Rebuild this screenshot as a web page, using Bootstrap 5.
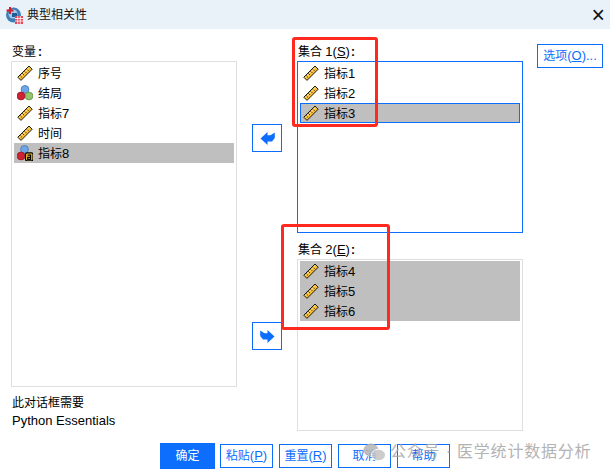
<!DOCTYPE html>
<html lang="zh-CN">
<head>
<meta charset="utf-8">
<title>典型相关性</title>
<link href="https://cdn.jsdelivr.net/npm/bootstrap@5.3.0/dist/css/bootstrap.min.css" rel="stylesheet">
<style>
html,body{margin:0;background:#fff;}
body{font-family:"Liberation Sans","Noto Sans CJK SC",sans-serif;font-size:12px;line-height:18px;color:#000;}
.dlg{width:610px;height:476px;position:relative;overflow:hidden;}
.lat{font-size:13px;}
.ttl{height:29px;background:#e9f2f9;padding-left:5px;color:#111;}
.ttl-x{margin-right:5px;font-family:"Liberation Sans",sans-serif;font-size:23px;line-height:20px;height:20px;color:#111;font-weight:400;}
.mainwrap{padding:14px 0 0 11px;}
.colleft,.colright{width:226px;}
.colmid{width:30px;margin:0 15px;}
.lbl{height:18px;padding-left:1px;white-space:nowrap;}
.cln{font-weight:700;padding-left:2px;}
.colright .cln{padding-left:1px;}
.box{border:1px solid #dfdfdf;padding:1px 2px;border-radius:0;background:#fff;}
.box-l{height:326px;}
.box-r{height:172px;}
.box-on{border-color:#0d6efd;}
.setgap{margin-top:8px;}
.row-i{height:20px;background:transparent;padding:2px 0 0 3px;border:0;border-radius:0;color:#000;line-height:18px;font-size:12px;gap:5px;}
.row-i svg{flex:none;margin-top:-2px;}
.row-sel{background:#bfbfbf;}
.row-foc{background:#bfbfbf;outline:1px solid #0d6efd;outline-offset:-1px;}
.note{padding:8px 0 0 1px;line-height:17px;}
.arrow{width:30px;height:28px;padding:0;border-radius:0;display:flex;align-items:center;justify-content:center;background:#fff;}
.arrow-a{margin-top:81px;}
.arrow-b{margin-top:170px;}
.opt{width:66px;height:24px;margin:1px 0 0 14px;padding:0;border-radius:0;font-size:12px;line-height:22px;}
.foot{margin-top:12px;padding-left:160px;gap:6px;height:26px;}
.fbtn{width:53px;height:24px;padding:0;border-radius:0;font-size:12px;line-height:22px;background:#fff;}
.fok{width:55px;height:26px;margin-right:-1px;border-radius:0;padding:0;font-size:12px;line-height:24px;}
.redbox{position:absolute;border:3px solid #ff2a1f;border-radius:3px;pointer-events:none;}
.red-a{left:292px;top:37px;width:86px;height:90px;}
.red-b{left:281px;top:224px;width:109px;height:106px;}
.wm{position:absolute;left:363px;top:442px;height:20px;color:#a6a6a6;opacity:.85;font-size:16px;line-height:20px;white-space:nowrap;gap:4px;pointer-events:none;letter-spacing:.8px;}
</style>
</head>
<body>
<svg width="0" height="0" class="position-absolute">
  <defs>
    <symbol id="ruler" viewBox="0 0 16 16">
      <path d="M0.8 12.2 L12 1 L15.2 4.2 L4 15.4 Z" fill="#f7bc2d" stroke="#1c1c1c" stroke-width="1" stroke-linejoin="round"/>
      <path d="M3.2 10.6l1.6 1.6M5.4 8.4l1.6 1.6M7.6 6.2l1.6 1.6M9.8 4l1.6 1.6" stroke="#1c1c1c" stroke-width="1" fill="none"/>
      <path d="M2.6 12.6L12.4 2.8" stroke="#ffe9a8" stroke-width=".8" fill="none"/>
    </symbol>
    <symbol id="balls" viewBox="0 0 16 16">
      <circle cx="8" cy="4.4" r="3.9" fill="#6ea6e6" stroke="#3f74b8" stroke-width=".8"/>
      <circle cx="12" cy="11" r="3.9" fill="#94c46c" stroke="#5f9440" stroke-width=".8"/>
      <circle cx="4" cy="11" r="3.9" fill="#cf2234" stroke="#9c1524" stroke-width=".8"/>
    </symbol>
    <symbol id="ballslock" viewBox="0 0 16 16">
      <circle cx="7.5" cy="4.4" r="3.9" fill="#6ea6e6" stroke="#3f74b8" stroke-width=".8"/>
      <circle cx="4" cy="11" r="3.9" fill="#cf2234" stroke="#9c1524" stroke-width=".8"/>
      <rect x="8.5" y="7.8" width="7.5" height="8" rx="1.6" fill="#f5c12e" stroke="#000" stroke-width="1.2"/>
      <path d="M10.6 10.2h3v4.2h-2.9v-2h2.9" fill="none" stroke="#000" stroke-width="1.2"/>
    </symbol>
  </defs>
</svg>
<div class="dlg">
  <div class="ttl d-flex align-items-center">
    <svg width="18" height="18" viewBox="0 0 18 18" class="me-1 flex-shrink-0">
      <circle cx="8.5" cy="9" r="7.5" fill="#3f7fb8"/>
      <circle cx="8" cy="8" r="4.5" fill="#a5c9e6"/>
      <path d="M5 1v7M1.5 4.5h7" stroke="#d3202e" stroke-width="2"/>
      <rect x="7" y="7" width="5" height="4" fill="#1f5f96"/>
      <rect x="10" y="10" width="8" height="8" fill="#e8445a"/>
      <path d="M10 12.5h8M10 15h8M12.7 10v8M15.3 10v8" stroke="#fff" stroke-width=".8"/>
    </svg>
    <span>典型相关性</span>
    <span class="ttl-x ms-auto">×</span>
  </div>

  <div class="mainwrap d-flex align-items-start">
    <div class="colleft">
      <div class="lbl">变量<span class="cln">:</span></div>
      <ul class="list-group box box-l">
        <li class="list-group-item row-i d-flex align-items-center"><svg width="16" height="16"><use href="#ruler"/></svg><span>序号</span></li>
        <li class="list-group-item row-i d-flex align-items-center"><svg width="16" height="16"><use href="#balls"/></svg><span>结局</span></li>
        <li class="list-group-item row-i d-flex align-items-center"><svg width="16" height="16"><use href="#ruler"/></svg><span>指标<span class="lat">7</span></span></li>
        <li class="list-group-item row-i d-flex align-items-center"><svg width="16" height="16"><use href="#ruler"/></svg><span>时间</span></li>
        <li class="list-group-item row-i row-sel d-flex align-items-center"><svg width="16" height="16"><use href="#ballslock"/></svg><span>指标<span class="lat">8</span></span></li>
      </ul>
      <div class="note">此对话框需要<br><span class="lat">Python Essentials</span></div>
    </div>

    <div class="colmid d-flex flex-column">
      <button type="button" class="btn btn-outline-primary arrow arrow-a" aria-label="移回">
        <svg width="15" height="15" viewBox="0 0 15 15"><path d="M0.5 7.5L7.5 1V4.2H10.5L14.8 1.6V7L12 10.6H7.5V14Z" fill="#0d6efd"/></svg>
      </button>
      <button type="button" class="btn btn-outline-primary arrow arrow-b" aria-label="移入">
        <svg width="15" height="15" viewBox="0 0 15 15"><path d="M14.5 7.5L7.5 1V4.2H4.5L0.2 1.6V7L3 10.6H7.5V14Z" fill="#0d6efd"/></svg>
      </button>
    </div>

    <div class="colright">
      <div class="lbl">集合 <span class="lat">1(<u>S</u>)</span><span class="cln">:</span></div>
      <ul class="list-group box box-r box-on">
        <li class="list-group-item row-i d-flex align-items-center"><svg width="16" height="16"><use href="#ruler"/></svg><span>指标<span class="lat">1</span></span></li>
        <li class="list-group-item row-i d-flex align-items-center"><svg width="16" height="16"><use href="#ruler"/></svg><span>指标<span class="lat">2</span></span></li>
        <li class="list-group-item row-i row-foc d-flex align-items-center"><svg width="16" height="16"><use href="#ruler"/></svg><span>指标<span class="lat">3</span></span></li>
      </ul>
      <div class="lbl setgap">集合 <span class="lat">2(<u>E</u>)</span><span class="cln">:</span></div>
      <ul class="list-group box box-r">
        <li class="list-group-item row-i row-sel d-flex align-items-center"><svg width="16" height="16"><use href="#ruler"/></svg><span>指标<span class="lat">4</span></span></li>
        <li class="list-group-item row-i row-sel d-flex align-items-center"><svg width="16" height="16"><use href="#ruler"/></svg><span>指标<span class="lat">5</span></span></li>
        <li class="list-group-item row-i row-sel d-flex align-items-center"><svg width="16" height="16"><use href="#ruler"/></svg><span>指标<span class="lat">6</span></span></li>
      </ul>
    </div>

    <button type="button" class="btn btn-outline-primary opt">选项<span class="lat">(<u>O</u>)...</span></button>
  </div>

  <div class="foot d-flex align-items-center">
    <button type="button" class="btn btn-primary fok">确定</button>
    <button type="button" class="btn btn-outline-primary fbtn">粘贴<span class="lat">(<u>P</u>)</span></button>
    <button type="button" class="btn btn-outline-primary fbtn">重置<span class="lat">(<u>R</u>)</span></button>
    <button type="button" class="btn btn-outline-primary fbtn">取消</button>
    <button type="button" class="btn btn-outline-primary fbtn">帮助</button>
  </div>

  <div class="redbox red-a"></div>
  <div class="redbox red-b"></div>
  <div class="wm d-flex align-items-center">
    <svg width="23" height="19" viewBox="0 0 23 19"><ellipse cx="8" cy="7" rx="7.5" ry="6.5" fill="#b5b5b5"/><ellipse cx="15.5" cy="12" rx="7" ry="5.8" fill="#c4c4c4" stroke="#fff" stroke-width="1"/></svg>
    <span>公众号 · 医学统计数据分析</span>
  </div>
</div>
<script src="https://cdn.jsdelivr.net/npm/bootstrap@5.3.0/dist/js/bootstrap.bundle.min.js"></script>
</body>
</html>
